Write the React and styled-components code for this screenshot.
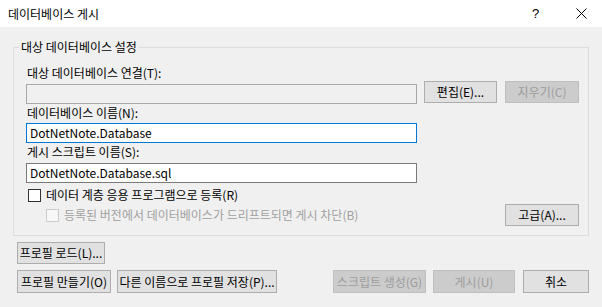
import React from "react";
import styled, { createGlobalStyle } from "styled-components";

const GlobalStyle = createGlobalStyle`
  html, body {
    margin: 0;
    padding: 0;
    background: #f0f0f0;
  }
  body {
    font-family: "Noto Sans CJK KR", "Noto Sans", sans-serif;
    font-size: 12px;
    color: #000;
  }
`;

const Dialog = styled.div`
  width: 602px;
  height: 307px;
  display: flex;
  flex-direction: column;
  background: #f0f0f0;
  overflow: hidden;
`;

const TitleBar = styled.div`
  height: 27px;
  flex: none;
  display: flex;
  align-items: center;
  background: #fff;
  padding-left: 8px;

  .title {
    flex: 1;
    line-height: 16px;
  }

  .help {
    width: 12px;
    margin-right: 32px;
    font-family: "Liberation Sans", sans-serif;
    font-size: 13px;
  }

  .close {
    width: 11px;
    height: 11px;
    margin-right: 15px;
  }
`;

const Group = styled.fieldset`
  margin: 12px 13px 0 13px;
  padding: 10px 9px 9px 12px;
  border: 1px solid #dcdcdc;
  min-width: 0;
  display: flex;
  flex-direction: column;

  legend {
    margin-left: -7px;
    padding: 0 2px;
    line-height: 16px;
  }
`;

const Label = styled.div`
  line-height: 16px;
  height: 16px;
  padding-left: 1px;
  margin-top: ${(p) => p.$top || 0}px;
`;

const Row = styled.div`
  display: flex;
  align-items: ${(p) => p.$align || "center"};
  margin-top: ${(p) => p.$top || 0}px;
`;

const TextBox = styled.div`
  box-sizing: border-box;
  width: 391px;
  height: 20px;
  padding: 0 3px;
  line-height: 18px;
  border: 1px solid ${(p) => (p.$focused ? "#0078d7" : p.$disabled ? "#a8a8a8" : "#7a7a7a")};
  background: ${(p) => (p.$disabled ? "#f0f0f0" : "#fff")};
  margin-top: ${(p) => p.$top || 0}px;
  white-space: nowrap;
`;

const Button = styled.button`
  box-sizing: border-box;
  width: ${(p) => p.$w}px;
  height: ${(p) => p.$h || 22}px;
  padding: 0;
  font: inherit;
  font-size: 12px;
  line-height: 16px;
  border: 1px solid ${(p) => (p.disabled ? "#bfbfbf" : "#adadad")};
  background: ${(p) => (p.disabled ? "#cccccc" : "#e1e1e1")};
  color: ${(p) => (p.disabled ? "#9d9d9d" : "#000")};
  margin-left: ${(p) => p.$left || 0}px;
  flex: none;
`;

const Check = styled.label`
  display: flex;
  align-items: center;
  gap: 5px;
  color: ${(p) => (p.$disabled ? "#a0a0a0" : "#000")};
  margin-left: ${(p) => p.$left || 0}px;
  line-height: 16px;

  .box {
    box-sizing: border-box;
    width: 13px;
    height: 13px;
    border: 1px solid ${(p) => (p.$disabled ? "#cccccc" : "#333333")};
    background: ${(p) => (p.$disabled ? "#f7f7f7" : "#fff")};
    flex: none;
  }
`;

const Spacer = styled.div`
  flex: 1;
`;

const Footer = styled.div`
  display: flex;
  flex-direction: column;
  gap: 6px;
  padding: 6px 13px 0 17px;
`;

export default function App() {
  return (
    <>
      <GlobalStyle />
      <Dialog>
        <TitleBar>
          <span className="title">데이터베이스 게시</span>
          <span className="help">?</span>
          <svg className="close" viewBox="0 0 11 11">
            <path d="M0.5 0.5 L10.5 10.5 M10.5 0.5 L0.5 10.5" stroke="#000" strokeWidth="1" fill="none" />
          </svg>
        </TitleBar>

        <Group>
          <legend>대상 데이터베이스 설정</legend>
          <Label>대상 데이터베이스 연결(T):</Label>
          <Row $align="flex-start">
            <TextBox $disabled $top={3} />
            <Button $w={73} $left={7}>편집(E)...</Button>
            <Button $w={74} $left={8} disabled>지우기(C)</Button>
          </Row>
          <Label $top={1}>데이터베이스 이름(N):</Label>
          <TextBox $focused $top={2}>DotNetNote.Database</TextBox>
          <Label $top={1}>게시 스크립트 이름(S):</Label>
          <TextBox $top={3}>DotNetNote.Database.sql</TextBox>
          <Row $top={4}>
            <Check $left={2}>
              <span className="box" />
              데이터 계층 응용 프로그램으로 등록(R)
            </Check>
          </Row>
          <Row $top={1}>
            <Check $disabled $left={20}>
              <span className="box" />
              등록된 버전에서 데이터베이스가 드리프트되면 게시 차단(B)
            </Check>
            <Spacer />
            <Button $w={74}>고급(A)...</Button>
          </Row>
        </Group>

        <Footer>
          <Row>
            <Button $w={88}>프로필 로드(L)...</Button>
          </Row>
          <Row>
            <Button $w={94} $h={23}>프로필 만들기(O)</Button>
            <Button $w={160} $h={23} $left={6}>다른 이름으로 프로필 저장(P)...</Button>
            <Spacer />
            <Button $w={93} $h={23} disabled>스크립트 생성(G)</Button>
            <Button $w={82} $h={23} $left={7} disabled>게시(U)</Button>
            <Button $w={66} $h={23} $left={8}>취소</Button>
          </Row>
        </Footer>
      </Dialog>
    </>
  );
}
